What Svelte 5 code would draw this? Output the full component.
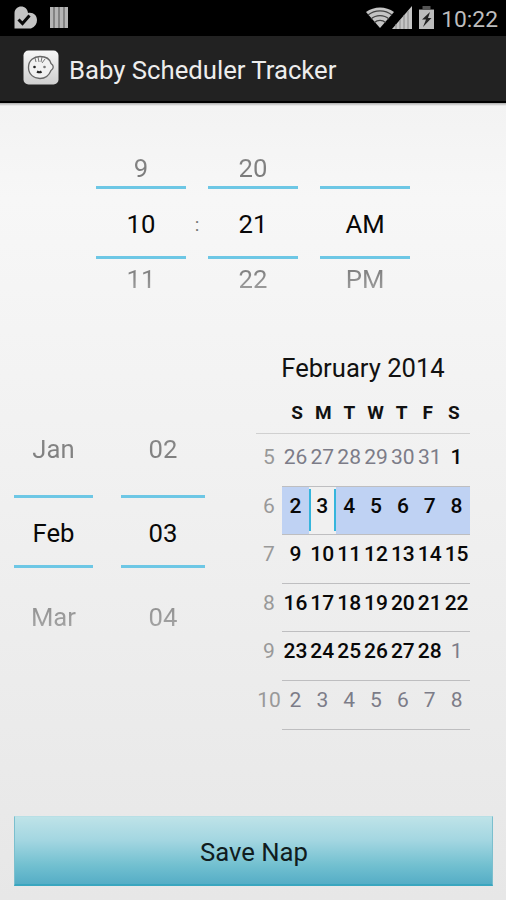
<script lang="ts">
  type Column = { before: string; value: string; after: string };

  const time: Column[] = [
    { before: "9", value: "10", after: "11" },
    { before: "20", value: "21", after: "22" },
    { before: "", value: "AM", after: "PM" },
  ];

  const date: Column[] = [
    { before: "Jan", value: "Feb", after: "Mar" },
    { before: "02", value: "03", after: "04" },
  ];

  const weekdays = ["S", "M", "T", "W", "T", "F", "S"];
  const firstWeek = 5;
  const selectedWeek = 6;
  const selectedDay = 3;

  // Six weeks starting on Sunday, January 26
  const weeks = Array.from({ length: 6 }, (_, w) => ({
    number: firstWeek + w,
    days: Array.from({ length: 7 }, (_, d) => {
      const day = new Date(2014, 0, 26 + w * 7 + d);
      return { label: day.getDate(), inMonth: day.getMonth() === 1 };
    }),
  }));
</script>

{#snippet wheel(column: Column)}
  <div class="wheel">
    <span class="faded">{column.before}</span>
    <span class="value">{column.value}</span>
    <span class="faded after">{column.after}</span>
  </div>
{/snippet}

<div class="screen">
  <div class="status-bar">
    <svg width="24" height="24" viewBox="0 0 24 24">
      <path d="M0.5 22.500V7C0.500 3 4 0.500 7 0.500c4 0 6.500 2.500 7 6.500 5-1 9 2 9 7 0 4-2 6.500-6 8.500z" fill="#c4c4c4" />
      <path d="M4.500 13.500l4 4 7-8" fill="none" stroke="#090909" stroke-width="3" />
    </svg>
    <svg class="bars" width="18" height="21" viewBox="0 0 18 21">
      <path d="M0 0h18v21H0z" fill="#777" />
      <path d="M1.500 0v21M6.500 0v21M11.500 0v21M16.500 0v21" stroke="#b5b5b5" stroke-width="3.400" />
    </svg>
    <svg class="wifi" width="28" height="21" viewBox="0 0 28 21">
      <path d="M14 21L0 5C8-1 20-1 28 5z" fill="#c5c5c5" />
      <path d="M2 8c7-5.500 17-5.500 24 0M5 12c5-4.500 13-4.500 18 0M8.500 15.500c3-2.800 8-2.800 11 0" fill="none" stroke="#444" stroke-width="1.300" />
    </svg>
    <svg class="signal" width="20" height="23" viewBox="0 0 20 23">
      <path d="M0 23L20 0v23z" fill="#c5c5c5" />
      <path d="M4 18v5M8 14v9M12 9v14M16 5v18" stroke="#888" stroke-width="1" />
    </svg>
    <svg class="battery" width="15" height="23" viewBox="0 0 15 23">
      <path d="M3.500 0h8v3H15v4H0V3h3.500z" fill="#555" />
      <path d="M0 4h15v19H0z" fill="#bcbcbc" />
      <path d="M11 6L3 13.500h4l-3 7.500 8.500-9H9z" fill="#222" />
    </svg>
    <span class="clock">10:22</span>
  </div>

  <header class="action-bar">
    <svg width="36" height="36" viewBox="0 0 36 36">
      <defs>
        <linearGradient id="tile" x1="0" y1="0" x2="0" y2="1">
          <stop offset="0" stop-color="#f7f7f7" />
          <stop offset="1" stop-color="#cfcfcf" />
        </linearGradient>
      </defs>
      <rect x="0.500" y="0.500" width="35" height="34" rx="5" fill="url(#tile)" />
      <path
        d="M5.500 17.500C5.500 10 11 6.500 17 6.500c6 0 10 3 11 7 3 2 3 5 0 7-2 5-6 8-11 8-6 0-11.500-4-11.500-11z"
        fill="#f1f1f1"
        stroke="#666"
        stroke-width="1.300"
      />
      <path d="M12 8l1 4M15 7l1 5M19 7l-1 5M22 9l-3 4" fill="none" stroke="#777" stroke-width="1" />
      <circle cx="11.500" cy="17" r="1.300" fill="#222" />
      <circle cx="21.500" cy="17" r="1.300" fill="#777" />
      <path d="M14 21.500q2.500 1.500 4.500 0" fill="none" stroke="#222" stroke-width="2.200" />
    </svg>
    <h1>Baby Scheduler Tracker</h1>
  </header>

  <main>
    <section class="time">
      {@render wheel(time[0])}
      <span class="colon">:</span>
      {@render wheel(time[1])}
      {@render wheel(time[2])}
    </section>

    <section class="date">
      <div class="wheels">
        {#each date as column}
          {@render wheel(column)}
        {/each}
      </div>

      <div class="calendar">
        <h2>February 2014</h2>
        <div class="weekdays">
          {#each weekdays as name}
            <span>{name}</span>
          {/each}
        </div>
        {#each weeks as week}
          <div class="week">
            <span class="number">{week.number}</span>
            <div class="days" class:current={week.number === selectedWeek}>
              {#each week.days as day}
                <span
                  class:in-month={day.inMonth}
                  class:selected={week.number === selectedWeek && day.label === selectedDay}
                >{day.label}</span>
              {/each}
            </div>
          </div>
        {/each}
      </div>
    </section>

    <button type="button">Save Nap</button>
  </main>
</div>

<style>
  :global(body) {
    margin: 0;
  }

  .screen {
    display: flex;
    flex-direction: column;
    width: 506px;
    height: 900px;
    overflow: hidden;
    background: #000;
    color: #111;
    font-family: Roboto, "Liberation Sans", sans-serif;
  }

  .status-bar {
    display: flex;
    align-items: flex-start;
    box-sizing: border-box;
    height: 36px;
    padding: 6px 8px 0 14px;
  }

  .bars {
    margin: 1px 0 0 12px;
  }

  .wifi {
    margin: 1px 0 0 auto;
  }

  .signal {
    margin-left: -2px;
  }

  .battery {
    margin-left: 7px;
  }

  .clock {
    margin-left: 7px;
    color: #bdbdbd;
    font-size: 22.8px;
    line-height: 27px;
  }

  .action-bar {
    display: flex;
    align-items: center;
    box-sizing: border-box;
    height: 67px;
    padding: 0 23px;
    gap: 10px;
    background: #222;
    border-bottom: 2px solid #000;
  }

  .action-bar svg {
    margin-top: -1px;
  }

  h1,
  h2 {
    margin: 0;
    font-weight: 400;
  }

  h1 {
    margin-top: 2px;
    color: #ededed;
    font-size: 25.7px;
    line-height: 30px;
    white-space: nowrap;
  }

  main {
    display: flex;
    flex: 1;
    flex-direction: column;
    padding: 47px 13px 14px 14px;
    background: linear-gradient(#aaa 0, #f3f3f3 3px, #f7f7f7 12%, #e7e7e7);
  }

  .wheel {
    display: flex;
    flex-direction: column;
    text-align: center;
    font-size: 25.7px;
  }

  .value {
    height: 65px;
    padding-top: 2px;
    border: solid #6dc7e5;
    border-width: 3px 0;
    color: #080808;
    line-height: 67px;
  }

  .faded {
    height: 36px;
    line-height: 37px;
    color: transparent;
    background: linear-gradient(#888, #777);
    background-clip: text;
  }

  .after {
    background-image: linear-gradient(#707070, #aaa);
    background-clip: text;
  }

  .time {
    display: flex;
    padding-left: 82px;
  }

  .time .wheel {
    width: 90px;
  }

  .time .wheel:last-child {
    margin-left: 22px;
  }

  .time .after {
    height: 40px;
    line-height: 41px;
  }

  .colon {
    align-self: center;
    width: 22px;
    color: #777;
    font-size: 19px;
    text-align: center;
  }

  .date {
    display: flex;
    justify-content: space-between;
    padding: 50px 23px 0 0;
  }

  .wheels {
    display: flex;
    align-items: flex-start;
    gap: 28px;
    padding-top: 81px;
  }

  .wheels .wheel {
    width: 79px;
  }

  .wheels .wheel + .wheel {
    width: 84px;
  }

  .wheels .faded {
    height: 65px;
    line-height: 38px;
  }

  .wheels .after {
    height: 66px;
    line-height: 98px;
  }

  .calendar {
    width: 214px;
  }

  h2 {
    height: 45px;
    font-size: 25.6px;
    line-height: 39px;
    text-align: center;
    white-space: nowrap;
  }

  .weekdays {
    display: flex;
    box-sizing: border-box;
    height: 40px;
    padding: 0 3px 0 28px;
    border-bottom: 1px solid #d0d0d0;
    font-size: 19px;
    font-weight: 700;
    line-height: 37px;
  }

  .weekdays span,
  .days span {
    flex: 1 0 0;
    min-width: 0;
    text-align: center;
  }

  .week {
    display: flex;
    font-size: 21px;
    line-height: 38px;
  }

  .number {
    width: 26px;
    color: #999;
    text-align: center;
  }

  .days {
    display: flex;
    flex: 1;
    box-sizing: border-box;
    height: 48.6px;
    border-bottom: 1.5px solid #bebec0;
    color: #7c7c88;
  }

  .week:nth-child(3) {
    padding-top: 4px;
  }

  .in-month {
    color: #080808;
    font-weight: 500;
  }

  .current {
    background: #bfd2f3;
  }

  /* The markers stop short of the row's edges */
  .days .selected {
    background:
      linear-gradient(#35b5dc, #35b5dc) left center / 2px 42px no-repeat,
      linear-gradient(#35b5dc, #35b5dc) right center / 2px 42px no-repeat,
      #f0f0f0;
  }

  button {
    height: 70px;
    margin-top: auto;
    padding: 2px 0 0 1px;
    border: 1px solid #7bbfce;
    border-top-color: #b8dfe5;
    border-bottom: 2px solid #39a6bf;
    background: linear-gradient(#bee3e8, #a3d6e1 35%, #72c0d0 72%, #55adc6);
    color: #101c20;
    font: inherit;
    font-size: 25.7px;
  }
</style>
